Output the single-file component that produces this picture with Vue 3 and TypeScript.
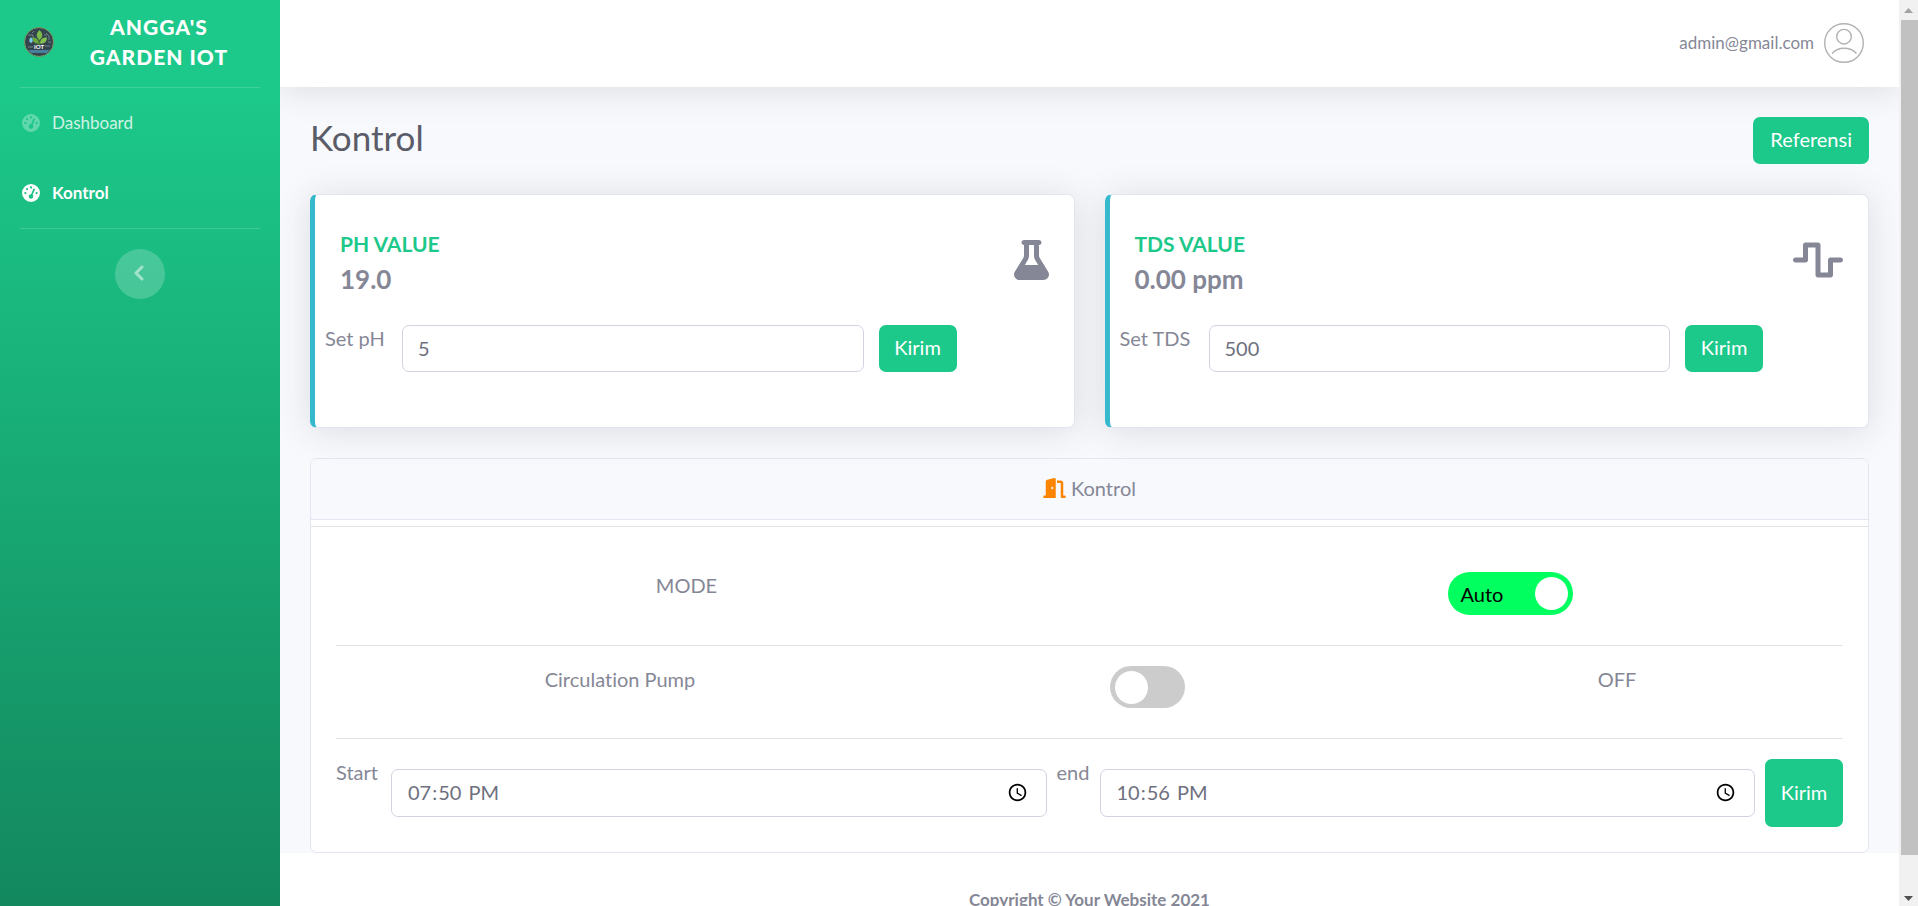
<script setup lang="ts">
import { ref } from 'vue'

interface NavItem {
  label: string
  active: boolean
}

interface Sensor {
  id: string
  title: string
  value: string
  label: string
  kind: 'short' | 'long'
  viewBox: string
  icon: string
}

const navItems: NavItem[] = [
  { label: 'Dashboard', active: false },
  { label: 'Kontrol', active: true },
]

const sensors: Sensor[] = [
  {
    id: 'ph',
    title: 'PH Value',
    value: '19.0',
    label: 'Set pH',
    kind: 'short',
    viewBox: '0 0 448 512',
    icon: 'M288 0H128C110.300 0 96 14.300 96 32s14.300 32 32 32V196.800c0 11.800-3.300 23.500-9.500 33.500L10.300 406.200C3.600 417.200 0 429.700 0 442.600C0 480.900 31.100 512 69.400 512H378.600c38.300 0 69.400-31.100 69.400-69.400c0-12.800-3.600-25.400-10.300-36.400L329.500 230.400c-6.200-10.100-9.500-21.700-9.500-33.500V64c17.700 0 32-14.300 32-32s-14.300-32-32-32H288zM192 196.800V64h64V196.800c0 23.700 6.600 46.900 19 67.100L309.500 320h-171L173 263.900c12.400-20.200 19-43.400 19-67.100z',
  },
  {
    id: 'tds',
    title: 'TDS Value',
    value: '0.00 ppm',
    label: 'Set TDS',
    kind: 'long',
    viewBox: '0 0 640 512',
    icon: 'M128 64c0-17.700 14.300-32 32-32H320c17.700 0 32 14.300 32 32V416h96V256c0-17.700 14.300-32 32-32H608c17.700 0 32 14.300 32 32s-14.300 32-32 32H512V448c0 17.700-14.300 32-32 32H320c-17.700 0-32-14.300-32-32V96H192V256c0 17.700-14.300 32-32 32H32c-17.700 0-32-14.300-32-32s14.300-32 32-32h96V64z',
  },
]

const setpoints = ref<Record<string, string>>({ ph: '5', tds: '500' })
const autoMode = ref(true)
const pumpOn = ref(false)
const startTime = ref('19:50')
const endTime = ref('22:56')
</script>

<template>
  <div class="window">
    <div class="page">
      <nav class="sidebar">
        <a class="brand" href="#">
          <svg class="brand-logo" viewBox="0 0 30 30" aria-hidden="true">
            <circle cx="15" cy="15" r="14.500" fill="#34444c" stroke="#7f9a63" />
            <path d="M4 8h5v4H5M22 6l3 3v4M4 20h5M21 19h5M8 6l2-2M24 15h3M20 8h3" fill="none" stroke="#71838c" />
            <path d="M15 18V9M15 17l-4-4M15 17l5-4" fill="none" stroke="#4f8b2f" />
            <path d="M15.500 3c4 4 3.500 7 0 10c-3.500-3-4-6 0-10z" fill="#7cba4b" />
            <path d="M14.500 16.500c-4.500 0-6-2-6-6c4.500 0 6 2 6 6z" fill="#69a83e" />
            <path d="M16 16.500c0-4.500 3-6.500 7-6c0 4-2.500 6.500-7 6z" fill="#83c052" />
            <path d="M7 10c2 3 2.500 5 0 6c-2.500-1-2-3 0-6z" fill="#79c9e8" />
            <path d="M4 23h22l-3 3H7z" fill="#477f9c" />
            <text x="15" y="22" text-anchor="middle" class="logo-text">IOT</text>
          </svg>
          <span class="brand-name">Angga's Garden IOT</span>
        </a>
        <hr class="side-line" />
        <a
          v-for="item in navItems"
          :key="item.label"
          href="#"
          class="nav-link"
          :class="{ active: item.active }"
        >
          <svg class="nav-icon" viewBox="0 0 512 512" aria-hidden="true">
            <path
              fill="currentColor"
              d="M0 256a256 256 0 1 1 512 0A256 256 0 1 1 0 256zM288 96a32 32 0 1 0 -64 0 32 32 0 1 0 64 0zM256 416c35.300 0 64-28.700 64-64c0-17.400-6.900-33.100-18.100-44.600L366 161.700c5.300-12.100-.2-26.300-12.300-31.600s-26.300 .2-31.600 12.300L257.900 288c-.6 0-1.300 0-1.900 0c-35.300 0-64 28.700-64 64s28.700 64 64 64zM176 144a32 32 0 1 0 -64 0 32 32 0 1 0 64 0zM96 288a32 32 0 1 0 0-64 32 32 0 1 0 0 64zm352-32a32 32 0 1 0 -64 0 32 32 0 1 0 64 0z"
            />
          </svg>
          <span>{{ item.label }}</span>
        </a>
        <hr class="side-line" />
        <button class="collapse" type="button" aria-label="Toggle sidebar">
          <svg viewBox="0 0 10 16" aria-hidden="true">
            <path d="M8 2L2 8l6 6" fill="none" stroke="currentColor" stroke-width="3" stroke-linecap="round" stroke-linejoin="round" />
          </svg>
        </button>
      </nav>

      <div class="content">
        <div class="upper">
          <header class="topbar">
            <a class="account" href="#">
              <span>admin@gmail.com</span>
              <svg viewBox="0 0 40 40" fill="none" stroke="#b2b2b4" stroke-width="1.400" aria-hidden="true">
                <circle cx="20" cy="20" r="19.300" />
                <circle cx="20" cy="13.700" r="7.300" />
                <path d="M8 30.500a17 17 0 0 1 24.500 0" />
              </svg>
            </a>
          </header>

          <main class="container">
            <div class="heading">
              <h1>Kontrol</h1>
              <button class="btn" type="button">Referensi</button>
            </div>

            <div class="cards">
              <section v-for="s in sensors" :key="s.id" class="sensor">
                <div class="reading">
                  <div>
                    <h2>{{ s.title }}</h2>
                    <p>{{ s.value }}</p>
                  </div>
                  <svg class="sensor-icon" :viewBox="s.viewBox" aria-hidden="true">
                    <path :d="s.icon" fill="currentColor" />
                  </svg>
                </div>
                <form class="setpoint" @submit.prevent>
                  <label :for="s.id" :class="s.kind">{{ s.label }}</label>
                  <input :id="s.id" v-model="setpoints[s.id]" class="field" type="text" inputmode="decimal" />
                  <button class="btn send" type="submit">Kirim</button>
                </form>
              </section>
            </div>

            <section class="panel">
              <h2 class="panel-head">
                <svg viewBox="0 0 576 512" aria-hidden="true">
                  <path
                    fill="#fb8500"
                    d="M320 32c0-9.900-4.500-19.200-12.300-25.200S289.800-1.400 280.200 1l-179.900 45C79 51.300 64 70.500 64 92.500V448H32c-17.700 0-32 14.300-32 32s14.300 32 32 32H320V32zM256 256c0 17.700-10.700 32-24 32s-24-14.300-24-32s10.700-32 24-32s24 14.300 24 32zm96-128h96V480c0 17.700 14.300 32 32 32h64c17.700 0 32-14.300 32-32s-14.300-32-32-32H512V128c0-35.300-28.700-64-64-64H352v64z"
                  />
                </svg>
                <span>Kontrol</span>
              </h2>
              <hr />
              <div class="panel-body">
                <div class="row mode">
                  <span>MODE</span>
                  <label class="switch wide" :class="{ on: autoMode }">
                    <span>{{ autoMode ? 'Auto' : 'Manual' }}</span>
                    <input v-model="autoMode" type="checkbox" />
                  </label>
                </div>
                <hr />
                <div class="row pump">
                  <span>Circulation Pump</span>
                  <label class="switch" :class="{ on: pumpOn }">
                    <input v-model="pumpOn" type="checkbox" aria-label="Circulation Pump" />
                  </label>
                  <span>{{ pumpOn ? 'ON' : 'OFF' }}</span>
                </div>
                <hr />
                <form class="schedule" @submit.prevent>
                  <label class="start" for="start">Start</label>
                  <input id="start" v-model="startTime" class="field" type="time" />
                  <label class="end" for="end">end</label>
                  <input id="end" v-model="endTime" class="field" type="time" />
                  <button class="btn send" type="submit">Kirim</button>
                </form>
              </div>
            </section>
          </main>
        </div>
        <footer class="footer">Copyright © Your Website 2021</footer>
      </div>
    </div>

    <div class="scrollbar" aria-hidden="true">
      <svg viewBox="0 0 19 20"><path d="M5 13l4.500-5 4.500 5z" fill="#a3a3a3" /></svg>
      <div class="track"><div class="thumb"></div></div>
      <svg viewBox="0 0 19 20"><path d="M5 10h9l-4.500 5z" fill="#505050" /></svg>
    </div>
  </div>
</template>

<style>
body {
  margin: 0;
  overflow: hidden;
}
</style>

<style scoped>
.window {
  display: flex;
  height: 100vh;
  overflow: hidden;
  font-family: Lato, 'Open Sans', sans-serif;
  font-size: 20px;
  line-height: 30px;
  font-variant-ligatures: none;
  color: #858796;
  background: #fff;
}
.window *,
.window *::before {
  box-sizing: border-box;
}
.page {
  display: flex;
  flex: 1;
  min-width: 0;
  align-self: flex-start;
  min-height: 100vh;
}
a {
  color: inherit;
  text-decoration: none;
}
h1,
h2,
p {
  margin: 0;
  font-weight: 400;
}
hr {
  width: 100%;
  height: 1px;
  margin: 0;
  border: 0;
  background: #e2e3e5;
}
button,
input {
  font: inherit;
}

/* Sidebar */
.sidebar {
  display: flex;
  flex: 0 0 280px;
  flex-direction: column;
  align-items: center;
  background: linear-gradient(180deg, #1cc88a 10%, #13855c 100%);
}
.brand {
  display: flex;
  align-items: center;
  width: 100%;
  height: 87px;
  padding: 0 20px 4px 24px;
  color: #fff;
}
.brand-logo {
  width: 30px;
  height: 30px;
  flex: none;
}
.logo-text {
  fill: #fff;
  font-size: 6px;
  font-weight: 700;
}
.brand-name {
  flex: 1;
  padding: 0 20px 0 24px;
  font-size: 21px;
  font-weight: 900;
  letter-spacing: 1px;
  text-align: center;
  text-transform: uppercase;
}
.side-line {
  width: 240px;
  background: rgba(255, 255, 255, 0.15);
}
.nav-link {
  display: flex;
  align-items: center;
  gap: 12px;
  width: 100%;
  height: 70px;
  padding: 0 22px;
  font-size: 17px;
  color: rgba(255, 255, 255, 0.8);
}
.nav-link.active {
  font-weight: 700;
  color: #fff;
}
.nav-icon {
  width: 18px;
  height: 18px;
  color: rgba(255, 255, 255, 0.3);
}
.active .nav-icon {
  color: #fff;
}
.collapse {
  display: grid;
  place-items: center;
  width: 50px;
  height: 50px;
  margin-top: 20px;
  padding: 0 3px 3px 0;
  border: 0;
  border-radius: 50%;
  color: rgba(255, 255, 255, 0.5);
  background: rgba(255, 255, 255, 0.2);
}
.collapse svg {
  width: 10px;
  height: 16px;
}

/* Main column */
.content {
  display: flex;
  flex: 1;
  flex-direction: column;
  min-width: 0;
  overflow: hidden;
}
.upper {
  background: #f8f9fc;
}
.topbar {
  display: flex;
  align-items: center;
  justify-content: flex-end;
  height: 87px;
  padding: 0 35px 2px;
  background: #fff;
  box-shadow: 0 3px 35px rgba(58, 59, 69, 0.15);
}
.account {
  display: flex;
  align-items: center;
  gap: 10px;
  font-size: 17px;
}
.account svg {
  width: 40px;
  height: 40px;
}
.container {
  padding: 30px 30px 0;
}
.heading {
  display: flex;
  align-items: flex-start;
  justify-content: space-between;
  margin-bottom: 30px;
}
h1 {
  font-size: 35px;
  line-height: 40px;
  color: #5a5c69;
}
.btn {
  min-height: 47px;
  padding: 7px 17px 10px;
  border: 0;
  border-radius: 7px;
  color: #fff;
  background: #1cc88a;
}
.send {
  flex: 0 0 78px;
  padding: 7px 10px 10px;
}
.field {
  min-width: 0;
  height: 47px;
  padding: 7px 15px 9px;
  border: 1px solid #d1d3e2;
  border-radius: 7px;
  color: #6e707e;
  background: #fff;
}
.cards {
  display: grid;
  grid-template-columns: 1fr 1fr;
  gap: 30px;
  margin-bottom: 30px;
}
.sensor {
  padding: 34px 0 55px;
  border: 1px solid #e3e6f0;
  border-left: 5px solid #36b9cc;
  border-radius: 7px;
  background: #fff;
  box-shadow: 0 3px 35px rgba(58, 59, 69, 0.15);
}
.reading {
  display: flex;
  align-items: center;
  justify-content: space-between;
  padding: 0 25px;
  margin-bottom: 31px;
}
.reading h2 {
  margin-bottom: 5px;
  font-size: 21px;
  font-weight: 700;
  text-transform: uppercase;
  color: #1cc88a;
}
.reading p {
  font-size: 26px;
  font-weight: 700;
}
.sensor-icon {
  height: 40px;
  margin-bottom: 4px;
}
.setpoint {
  display: flex;
  align-items: flex-start;
  gap: 15px;
  padding: 0 10px;
}
.setpoint .field {
  flex: 0 0 62.5%;
}
.setpoint label,
.schedule label,
.row > span {
  line-height: 26px;
}
.setpoint .short {
  flex: 0 0 62px;
}
.setpoint .long {
  flex: 0 0 74px;
}

/* Control panel */
.panel {
  border: 1px solid #e3e6f0;
  border-radius: 7px;
  background: #fff;
}
.panel-head {
  display: flex;
  align-items: center;
  justify-content: center;
  gap: 5px;
  margin-bottom: 6px;
  padding: 14px 25px 16px;
  border-bottom: 1px solid #e3e6f0;
  border-radius: 6px 6px 0 0;
  font-size: 20px;
  background: #f8f9fc;
}
.panel-head svg {
  width: 23px;
  height: 20px;
}
.panel-body {
  padding: 25px;
}
.row {
  display: grid;
  justify-items: center;
  align-items: start;
  padding: 20px 0 30px;
}
.mode {
  grid-template-columns: 701fr 666fr;
  column-gap: 140px;
}
.pump {
  grid-template-columns: 568fr 487fr 452fr;
}
.switch {
  display: flex;
  align-items: center;
  width: 75px;
  height: 42px;
  padding: 0 5px;
  border-radius: 22px;
  background: #ccc;
}
.switch.wide {
  justify-content: space-between;
  width: 125px;
  height: 43px;
  padding-left: 13px;
  line-height: 28px;
  color: #000;
}
.switch.on {
  background: #00ff5f;
}
.switch.on input {
  margin-left: auto;
}
.switch input {
  width: 33px;
  height: 33px;
  margin: 0;
  border-radius: 50%;
  background: #fff;
  appearance: none;
}
.schedule {
  display: flex;
  gap: 10px;
  padding-top: 20px;
}
.schedule .field {
  flex: 1;
  height: 48px;
  margin: 10px 0;
}
.schedule .start {
  flex: 0 0 45px;
}
.schedule .end {
  flex: 0 0 33px;
}
.footer {
  padding: 37px 0 33px;
  font-size: 17px;
  font-weight: 700;
  line-height: 20px;
  text-align: center;
}

/* Scrollbar */
.scrollbar {
  display: flex;
  flex: 0 0 19px;
  flex-direction: column;
  background: #f1f1f1;
}
.scrollbar svg {
  flex: 0 0 20px;
}
.track {
  flex: 1;
  padding-left: 2px;
}
.thumb {
  height: 96.4%;
  background: #c1c1c1;
}
</style>
